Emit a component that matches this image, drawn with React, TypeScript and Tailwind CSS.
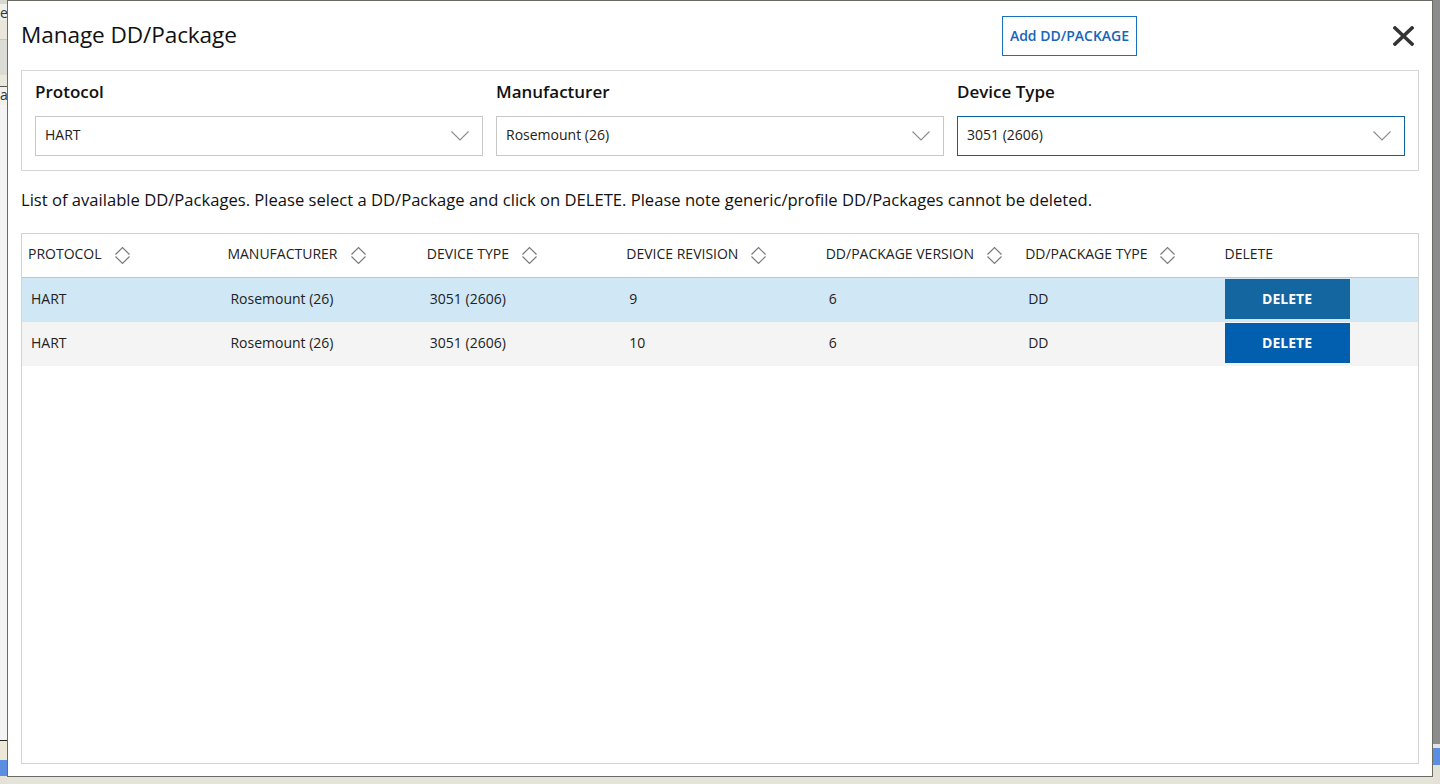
import React from 'react'

type Row = {
    protocol: string
    manufacturer: string
    deviceType: string
    revision: string
    version: string
    packageType: string
    selected?: boolean
}

const columns = [
    { label: 'PROTOCOL', sortable: true },
    { label: 'MANUFACTURER', sortable: true },
    { label: 'DEVICE TYPE', sortable: true },
    { label: 'DEVICE REVISION', sortable: true },
    { label: 'DD/PACKAGE VERSION', sortable: true },
    { label: 'DD/PACKAGE TYPE', sortable: true },
    { label: 'DELETE', sortable: false },
]

const rows: Row[] = [
    { protocol: 'HART', manufacturer: 'Rosemount (26)', deviceType: '3051 (2606)', revision: '9', version: '6', packageType: 'DD', selected: true },
    { protocol: 'HART', manufacturer: 'Rosemount (26)', deviceType: '3051 (2606)', revision: '10', version: '6', packageType: 'DD' },
]

const font = { fontFamily: '"Open Sans", "Noto Sans", sans-serif' }

function SortIcon() {
    return (
        <svg width="17" height="19" viewBox="0 0 17 19" className="ml-3 shrink-0">
            <path d="M1.5 8.5 L8.5 1.5 L15.5 8.5" fill="none" stroke="#7a7a7a" strokeWidth="1.2" />
            <path d="M1.5 10.5 L8.5 17.5 L15.5 10.5" fill="none" stroke="#7a7a7a" strokeWidth="1.2" />
        </svg>
    )
}

function Chevron() {
    return (
        <svg width="18" height="10" viewBox="0 0 18 10">
            <path d="M0.5 0.5 L9 9 L17.5 0.5" fill="none" stroke="#8c8c8c" strokeWidth="1.1" />
        </svg>
    )
}

function SelectBox({ label, value, active }: { label: string; value: string; active?: boolean }) {
    return (
        <div className="flex flex-col">
            <span className="text-[17px] font-semibold leading-6 text-[#111]">{label}</span>
            <div
                className={`mt-3 flex h-10 items-center justify-between border bg-white pl-[9px] pr-[13px] text-[14px] text-[#222] ${
                    active ? 'border-[#0b5fa5]' : 'border-[#c8c8c8]'
                }`}
            >
                <span className="pb-[3px]">{value}</span>
                <Chevron />
            </div>
        </div>
    )
}

export default function App() {
    return (
        <div className="flex h-[784px] w-[1440px] overflow-hidden bg-[#e6e4d8]" style={font}>
            {/* page behind the modal, left side */}
            <div className="flex w-[7px] shrink-0 flex-col bg-[#f1f0ea] text-[14px] leading-none text-[#333]">
                <div className="h-[4px] bg-[#d8d8d2]" />
                <div className="h-[16px] overflow-hidden pt-[2px]">e</div>
                <div className="h-[20px] border-b border-[#c8c6ba] bg-[#e9e7dc]" />
                <div className="h-[35px] bg-[#dcdcd6]" />
                <div className="h-[12px] border-b border-[#555] bg-[#ebe9de]" />
                <div className="h-[18px] overflow-hidden pt-[1px]">a</div>
                <div className="h-[635px] bg-[#f4f4f4]" />
                <div className="h-[20px] border-t border-[#222] bg-[#ece9d8]" />
                <div className="h-[16px] bg-[#5b8de0]" />
                <div className="flex-1 bg-[#e4e2d6]" />
            </div>

            {/* modal */}
            <div className="flex h-[777px] w-[1426px] shrink-0 flex-col border border-[#6b6b66] bg-white px-[13px] pb-[12px]">
                <div className="flex h-[69px] shrink-0 items-center">
                    <h1 className="flex-1 pb-[2px] text-[22.6px] font-medium tracking-[-0.1px] text-[#111]">Manage DD/Package</h1>
                    <button className="flex h-10 w-[135px] items-center justify-center border border-[#1a6fc0] bg-white pb-[1px] text-[14px] font-semibold text-[#1565b8]">
                        Add DD/PACKAGE
                    </button>
                    <button className="ml-[254px] mr-[4px] flex h-6 w-6 items-center justify-center" aria-label="Close">
                        <svg width="21" height="20" viewBox="0 0 21 20">
                            <path d="M2 2 L19 18 M19 2 L2 18" stroke="#333" strokeWidth="3.6" strokeLinecap="square" />
                        </svg>
                    </button>
                </div>

                <div className="grid shrink-0 grid-cols-3 gap-[13px] border border-[#d6d6d6] px-[13px] pt-[9px] pb-[14px]">
                    <SelectBox label="Protocol" value="HART" />
                    <SelectBox label="Manufacturer" value="Rosemount (26)" />
                    <SelectBox label="Device Type" value="3051 (2606)" active />
                </div>

                <p className="mt-[17px] mb-[21px] text-[16.6px] leading-6 text-[#111]">
                    List of available DD/Packages. Please select a DD/Package and click on DELETE. Please note generic/profile DD/Packages cannot be deleted.
                </p>

                <div className="flex-1 border border-[#d3d3d3]">
                    <div className="grid h-[44px] grid-cols-7 border-b border-[#c4c4c4] text-[14px] text-[#222]">
                        {columns.map((col) => (
                            <div key={col.label} className="flex items-center pl-[6px]">
                                <span className="pb-[4px]">{col.label}</span>
                                {col.sortable && <SortIcon />}
                            </div>
                        ))}
                    </div>
                    {rows.map((row, i) => (
                        <div
                            key={i}
                            className={`grid h-[44px] grid-cols-7 items-center text-[14px] text-[#222] ${
                                row.selected ? 'bg-[#d0e7f6]' : 'bg-[#f4f4f4]'
                            }`}
                        >
                            <div className="pb-[4px] pl-[9px]">{row.protocol}</div>
                            <div className="pb-[4px] pl-[9px]">{row.manufacturer}</div>
                            <div className="pb-[4px] pl-[9px]">{row.deviceType}</div>
                            <div className="pb-[4px] pl-[9px]">{row.revision}</div>
                            <div className="pb-[4px] pl-[9px]">{row.version}</div>
                            <div className="pb-[4px] pl-[9px]">{row.packageType}</div>
                            <div className="self-start pt-[1px] pl-[6px]">
                                <button
                                    className={`flex h-[40px] w-[125px] items-center justify-center pb-[2px] text-[14px] font-bold text-white ${
                                        row.selected ? 'bg-[#13669f]' : 'bg-[#025fb0]'
                                    }`}
                                >
                                    DELETE
                                </button>
                            </div>
                        </div>
                    ))}
                </div>
            </div>

            {/* page behind the modal, right side */}
            <div className="flex w-[7px] shrink-0 flex-col">
                <div className="h-[744px] bg-[#8c8c8c]" />
                <div className="h-[4px] bg-[#e4e4e4]" />
                <div className="h-[17px] bg-[#5b8de0]" />
                <div className="flex-1 bg-[#e4e2d6]" />
            </div>
        </div>
    )
}
